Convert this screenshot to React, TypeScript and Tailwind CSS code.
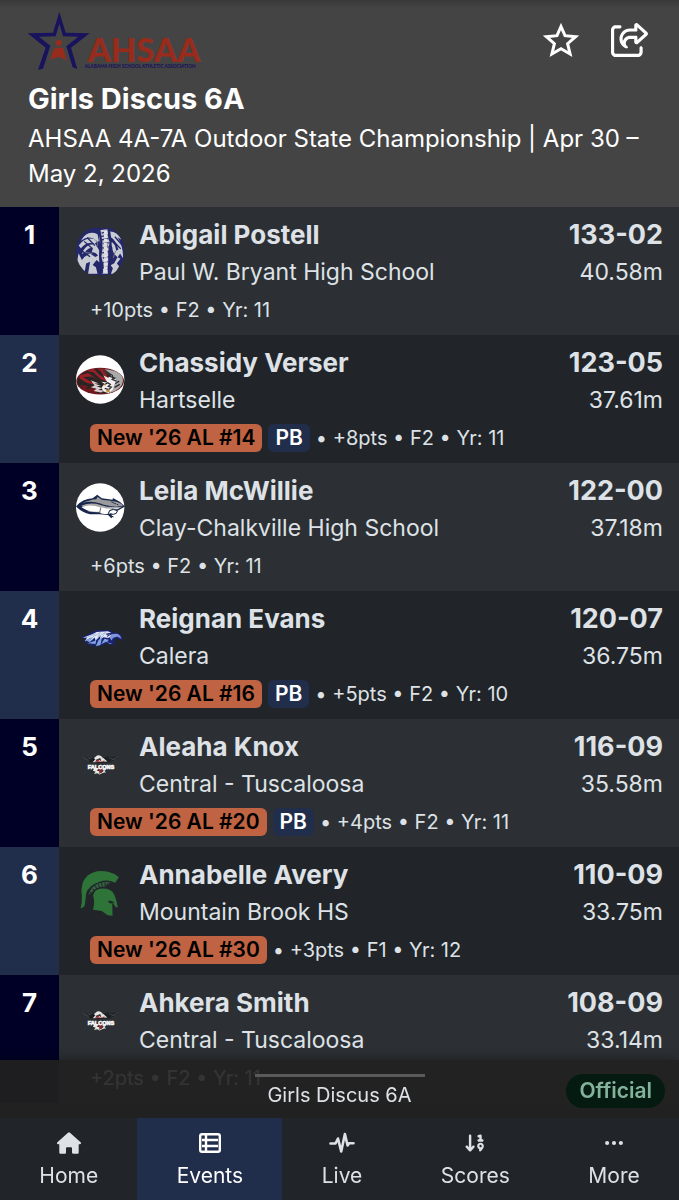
import React from 'react';
import { FaArrowDown19, FaRegShareFromSquare } from 'react-icons/fa6';
import { BsThreeDots } from 'react-icons/bs';

interface Result {
  name: string;
  school: string;
  mark: string;
  metric: string;
  badge?: string;
  pb?: boolean;
  details: string[];
  logo: React.FC;
}

const Elephant: React.FC = () => (
  <svg viewBox="0 0 150 150" className="size-full" aria-hidden="true">
    <clipPath id="elephant"><path d="M38 6Q75-2 112 6Q149 32 149 75Q149 118 112 144Q75 152 38 144Q0 118 0 75Q0 32 38 6Z" /></clipPath>
    <g clipPath="url(#elephant)">
      <path fill="#24276a" d="M0 0h150v150H0z" />
      <g fill="#c9cbd3">
        <path d="M70 10 96 7 99 37 107 50 100 71 103 95 95 125 98 143H80L85 118 77 90 82 63 72 43Z" />
        <path d="M66 22Q34 8 15 42Q38 25 59 38Q29 28 8 57L15 65Q35 41 60 53Q28 50 18 83L27 78Q38 60 52 65L48 77Q62 76 67 88L59 92 43 81Q27 88 18 101L8 80 3 108 26 140 31 112 43 106 37 143H66L61 123 51 116 63 101 72 109 71 71 58 50 70 43Z" />
        <path d="M101 14Q125 12 139 39L127 31Q145 58 144 96L135 81 124 98 117 111 106 117 113 126 107 143H119L132 120 125 112 136 97Q112 87 111 62L104 43Q121 50 123 73L130 69Q122 39 103 29Z" />
      </g>
      <g fill="none" stroke="#24276a" strokeWidth="4">
        <path d="M78 19 94 15M77 29 97 26M80 39 98 36M84 51 102 48M83 65 101 61M80 79 102 75M82 95 102 90M83 110 98 106M83 125 95 121" />
        <path d="M25 44 50 66M34 32 58 57M18 73 43 91M107 35 137 67M119 30 141 55" />
      </g>
      <path d="M71 8 78 48 74 88 79 142M101 12 106 46 102 80 102 142" fill="none" stroke="#24276a" strokeWidth="7" />
      <path d="M91 12v128" stroke="#e0e1e6" strokeWidth="11" strokeDasharray="10 2" />
      <path d="m59 39 8 9-3 12M103 43l-7 11 4 13M28 78l22 3M121 73l-7 22" stroke="#737a88" strokeWidth="3" fill="none" />
    </g>
  </svg>
);

const Tiger: React.FC = () => (
  <svg viewBox="0 0 150 150" className="size-full" aria-hidden="true">
    <circle cx="74" cy="75" r="74" fill="#fff" />
    <ellipse cx="74" cy="80" rx="73" ry="41" fill="#6f1a20" />
    <ellipse cx="74" cy="80" rx="69" ry="37" fill="#292525" />
    <path d="M87 44Q145 49 144 79Q141 106 104 116L97 98 119 91 113 62Z" fill="#aaa9aa" />
    <path d="M10 63 37 55 70 77 49 66 21 67 61 91 34 86 11 72ZM30 48 54 43 72 61 91 73 77 52 66 41 88 44 104 61 91 56 98 71 111 73 93 80 77 75 53 53Z" fill="#9e2027" />
    <path d="M12 91 38 96 28 105 52 101 75 111 55 118 28 110Z" fill="#75181c" />
    <path d="M84 63 98 70 109 61 112 76 123 71 119 84 132 84 117 91 113 106 99 117 83 111 78 100 87 88 77 82 96 84Z" fill="#f0eeee" />
    <path d="M45 77 70 87 56 87 76 94 63 96 80 102 68 107 86 109 77 115 54 110 63 103 45 99 57 93Z" fill="#d8cccc" />
    <path d="M83 47 96 53 90 55 107 61 102 65 119 71 111 75 124 80" fill="none" stroke="#393538" strokeWidth="4" />
    <path d="m87 91 10-6 8 5-6 6 9 2-8 8-12-4M120 88l12-8M118 99l16-9" fill="none" stroke="#28272b" strokeWidth="4" />
    <path d="m85 90 8-1-3 5ZM91 109l10-5 3 8-8 3Z" fill="#bd8b35" />
  </svg>
);

const Shark: React.FC = () => (
  <svg viewBox="0 0 150 150" className="size-full" aria-hidden="true">
    <circle cx="74" cy="75" r="74" fill="#fff" />
    <path d="M0 72Q20 48 51 47L65 36 79 47 112 51 113 46 120 50Q137 57 150 72L127 85 120 82 107 92 112 103 108 108 98 98 72 96 43 96Q15 88 0 72Z" fill="#17274b" />
    <path d="M18 62Q43 51 62 50L66 42 79 51 112 55Q136 59 145 69L123 73Q94 71 75 63Q45 53 18 62Z" fill="#9b9a9d" />
    <path d="M16 70Q44 57 75 67Q104 77 143 72L126 81 112 78 100 86 84 83 75 76 76 90 40 88Z" fill="#aaa7a7" />
    <path d="M17 74Q45 64 75 75L70 88Q40 90 17 74ZM78 74Q103 83 134 76L122 80 105 82 98 94Q82 96 74 92Z" fill="#fff" />
    <path d="m100 92 3-8 12-3 12 4-4 8-9 3-9-2 3 7 7 3" fill="#fff" stroke="#101e40" strokeWidth="3" />
    <path d="m108 57 8 4M117 63h5M125 66h4" stroke="#17274b" strokeWidth="3" />
  </svg>
);

const Eagle: React.FC = () => (
  <svg viewBox="0 -11 150 150" className="size-full" aria-hidden="true">
    <path d="M16 69 42 59 60 49 101 47 116 56Q137 55 141 67L142 80 133 76 125 72 117 78 119 90 109 93 93 87 78 95 67 92 60 102 57 93 38 97 45 89 27 90 36 82 19 80 32 76Z" fill="#1b2376" />
    <path d="m21 71 29-11 13-7 35-2 10 5-18 2 21 6-12 8-15-3-11 8 2-13-15 16-3-10-16 15 4-15-18 12 7-12Z" fill="#e4e9f5" />
    <path d="m29 78 24-10-12 17ZM36 88l22-8 5-9-3 19ZM61 97l7-18 12-12-5 26ZM77 91l10-17 13 3-5 8 16 4-7 1-12-7Z" fill="#80a2dc" />
    <path d="m33 70 26-12-7 10 23-14-8 14 24-14-11 15" fill="none" stroke="#acbddd" strokeWidth="3" />
    <path d="m108 60 13-1q13-1 18 15l-13-7-13 5-4 7-6-8Z" fill="#8197dc" />
    <path d="m93 61 9 2-7 4" fill="none" stroke="#18236d" strokeWidth="3" />
  </svg>
);

const Falcons: React.FC = () => (
  <svg viewBox="0 -3 150 150" className="size-full" aria-hidden="true">
    <path d="m10 48 18 4 14 6 15-6 10 8 7-12 11 8 11-6 10 4 26-7-13 7 10 2-22 4 10 3-21 7H49l-13-6 4-3-14-3 5-3-16-4Z" fill="#1c1f22" />
    <path d="m16 50 19 9 13-4M99 55l16 3 14-9M24 55l17 10M108 62l13-6" stroke="#484b4e" strokeWidth="2" fill="none" />
    <path d="M60 51q10-9 21 2l2 7-11-4-12 5-5-6ZM59 60l-8 8 45-2-11-9-7 9-8-6-6 6Z" fill="#e8e6e2" />
    <path d="m75 60 9-5 4 6-10 4ZM56 85l12 2-4 7 8 2-1 8 14-9-5-6 12-5v6l-5 5 5 4-11 2-8 5-8-4-10 2 5-7-8-3Z" fill="#e8e6e2" />
    <path d="m68 60 7 8 12-6v5H57ZM68 84h12l-2 18-6-4Z" fill="#99292b" />
    <text x="36" y="88" fontFamily="Liberation Sans" fontWeight="900" fontSize="17" fill="#f2f2f2" stroke="#f2f2f2" strokeWidth="2">FALCONS</text>
  </svg>
);

const Spartan: React.FC = () => (
  <svg viewBox="0 0 150 150" className="size-full" fill="#2e7338" aria-hidden="true">
    <path d="M14 126Q19 110 18 90Q12 48 35 27Q59 7 95 14Q115 18 131 31L120 48Q96 37 73 45Q39 55 31 81Q29 101 27 117Q23 127 14 126Z" />
    <path d="m38 86 10-22 18-13 24-6 15 2-15 14Q62 59 47 79Z" fill="#356444" />
    <path d="M51 66 59 77M59 58 66 70M68 51 73 66M78 48 81 62M89 46v15M99 47l-8 14M43 76l9 10" stroke="#202529" strokeWidth="3" />
    <path d="M52 131Q59 103 52 87Q57 65 81 66Q109 66 117 84L123 101 128 123 122 123 114 112 111 111 112 149 97 148 79 135Z" />
    <path d="m96 104 10-1 12 6-8 3-10-2 1-4Z" fill="#202529" />
  </svg>
);

const results: Result[] = [
  { name: 'Abigail Postell', school: 'Paul W. Bryant High School', mark: '133-02', metric: '40.58m', details: ['+10pts', 'F2', 'Yr: 11'], logo: Elephant },
  { name: 'Chassidy Verser', school: 'Hartselle', mark: '123-05', metric: '37.61m', badge: "New '26 AL #14", pb: true, details: ['+8pts', 'F2', 'Yr: 11'], logo: Tiger },
  { name: 'Leila McWillie', school: 'Clay-Chalkville High School', mark: '122-00', metric: '37.18m', details: ['+6pts', 'F2', 'Yr: 11'], logo: Shark },
  { name: 'Reignan Evans', school: 'Calera', mark: '120-07', metric: '36.75m', badge: "New '26 AL #16", pb: true, details: ['+5pts', 'F2', 'Yr: 10'], logo: Eagle },
  { name: 'Aleaha Knox', school: 'Central - Tuscaloosa', mark: '116-09', metric: '35.58m', badge: "New '26 AL #20", pb: true, details: ['+4pts', 'F2', 'Yr: 11'], logo: Falcons },
  { name: 'Annabelle Avery', school: 'Mountain Brook HS', mark: '110-09', metric: '33.75m', badge: "New '26 AL #30", details: ['+3pts', 'F1', 'Yr: 12'], logo: Spartan },
  { name: 'Ahkera Smith', school: 'Central - Tuscaloosa', mark: '108-09', metric: '33.14m', details: ['+2pts', 'F2', 'Yr: 11'], logo: Falcons },
];

const AssociationLogo = () => (
  <svg viewBox="83 34 525 177" className="h-[59px] w-[175px] overflow-visible" role="img" aria-label="AHSAA">
    <path d="M113 210 136 144 82 101 158 99 177 36 196 99 268 101 212 144 231 208 217 203 198 140 234 111 188 110 177 72 166 110 116 111 150 138 128 207Z" fill="#18135c" />
    <circle cx="175" cy="129" r="9" fill="#982c1c" />
    <path d="M164 144h24l5 15 5 24-13-8-10-4-13 5-12 5 6-22Z" fill="#982c1c" />
    <text x="262" y="186" fontFamily="Lato" fontWeight="900" fontSize="99" fill="#982c1c">AHSAA</text>
    <text x="253" y="204" fontFamily="Lato" fontWeight="900" fontSize="14" fill="#18135c">ALABAMA HIGH SCHOOL ATHLETIC ASSOCIATION</text>
  </svg>
);

const HomeIcon = () => (
  <svg viewBox="0 0 24 22" className="h-[22px] w-6" fill="currentColor" aria-hidden="true">
    <path d="M11 .7a1.6 1.6 0 0 1 2 0l10.6 9.6c.8.8.4 2-.7 2H21.7v8.2c0 .8-.6 1.3-1.3 1.3h-4.2c-.7 0-1.2-.5-1.2-1.2v-4c0-.8-.5-1.3-1.2-1.3h-3.6c-.7 0-1.2.5-1.2 1.2v4c0 .8-.5 1.3-1.2 1.3H3.6c-.7 0-1.3-.5-1.3-1.3v-8.2H1.1c-1.1 0-1.5-1.2-.7-2Z" />
  </svg>
);

const EventsIcon = () => (
  <svg viewBox="0 0 22 20" className="h-5 w-[22px]" fill="none" stroke="currentColor" strokeWidth="2.4" aria-hidden="true">
    <rect x="1.2" y="1.2" width="19.6" height="17.6" rx="1.8" />
    <path d="M3 7h16M3 13h16M7 2v16" />
  </svg>
);

const LiveIcon = () => (
  <svg viewBox="0 0 26 22" className="h-[22px] w-[26px]" fill="none" stroke="currentColor" strokeWidth="2.6" strokeLinecap="round" strokeLinejoin="round" aria-hidden="true">
    <path d="M1.5 11.5h5l2.5-5 3.2 13 3.7-17.5 2.7 11.5 1.4-2.2h4.5" />
  </svg>
);

const tabs = [
  { label: 'Home', icon: <HomeIcon /> },
  { label: 'Events', icon: <EventsIcon />, active: true },
  { label: 'Live', icon: <LiveIcon /> },
  { label: 'Scores', icon: <FaArrowDown19 className="size-[22px]" /> },
  { label: 'More', icon: <BsThreeDots className="size-[22px]" /> },
];

const ResultRow = ({ result, place }: { result: Result; place: number }) => {
  const Logo = result.logo;
  return (
    <li className="group flex min-h-32 odd:bg-[#2c3034] even:bg-[#212529]">
      <div className="w-[59px] shrink-0 pt-2.5 text-center text-[26px] leading-9 font-bold text-white group-odd:bg-[#000026] group-even:bg-[#202d4b]">
        {place}
      </div>
      <div className="min-w-0 flex-1 pt-2.5 pr-4">
        <div className="flex pl-[17px]">
          <div className="mt-2.5 mr-3.5 size-[49px] shrink-0">
            <Logo />
          </div>
          <div className="min-w-0 flex-1">
            <h2 className="truncate text-[26px] leading-9 font-bold">{result.name}</h2>
            <p className="truncate text-[23px] leading-[38px]">{result.school}</p>
          </div>
          <div className="text-right">
            <p className="text-[27px] leading-9 font-bold">{result.mark}</p>
            <p className="text-[23px] leading-[38px]">{result.metric}</p>
          </div>
        </div>
        <div className="mt-[5px] flex h-7 items-center gap-1.5 pl-[31px] text-xl leading-7">
          {result.badge && <span className="rounded-md bg-[#bf6342] px-[7px] text-[21px] font-semibold text-black">{result.badge}</span>}
          {result.pb && <span className="rounded-md bg-[#202d4b] px-[7px] text-[21px] font-semibold text-white">PB</span>}
          <span className="whitespace-pre">{result.badge ? '• ' : ''}{result.details.join(' • ')}</span>
        </div>
      </div>
    </li>
  );
};

export default function App() {
  return (
    <div className="min-h-screen bg-[#212529] font-['Inter',sans-serif] text-[#dee2e6]">
      <header className="bg-[#444] bg-linear-to-b from-[#383838] to-[#444] to-[8px] px-7 pt-[11px] pb-4 text-white">
        <div className="flex items-start justify-between">
          <AssociationLogo />
          <div className="flex items-center gap-8 pt-2.5 pr-0.5">
            <button type="button" aria-label="Favorite">
              <svg viewBox="0 0 36 36" className="size-9" fill="none" stroke="currentColor" strokeWidth="3" aria-hidden="true">
                <path d="m18 4.5 4 9.2 10.6 1-8 7 2.5 10.3L18 26.8 8.9 32l2.5-10.3-8-7 10.6-1Z" />
              </svg>
            </button>
            <button type="button" aria-label="Share">
              <FaRegShareFromSquare className="size-[38px]" />
            </button>
          </div>
        </div>
        <h1 className="mt-[11px] text-[29px] leading-9 font-bold">Girls Discus 6A</h1>
        <p className="mt-1 text-2xl leading-[35px]">AHSAA 4A-7A Outdoor State Championship | Apr 30 – May 2, 2026</p>
      </header>

      <main>
        <ol>
          {results.map((result, index) => (
            <ResultRow key={result.name} result={result} place={index + 1} />
          ))}
        </ol>
      </main>

      <footer className="fixed inset-x-0 bottom-0">
        <div className="grid h-[58px] grid-cols-[1fr_auto_1fr] bg-[#212121]/90 shadow-[0_-2px_10px_rgba(0,0,0,0.3)]">
          <div className="col-start-2 flex flex-col items-center pt-3.5">
            <div className="h-[3px] w-[170px] bg-[#5a5a5a]" />
            <p className="mt-1 text-xl leading-7">Girls Discus 6A</p>
          </div>
          <span className="mt-3.5 mr-3.5 h-[34px] justify-self-end rounded-full bg-[#051b11] px-[13px] text-[21px] leading-[34px] font-semibold text-[#83b39b]">Official</span>
        </div>
        <nav className="flex h-[82px] bg-[#212529]">
          {tabs.map((tab) => (
            <a
              key={tab.label}
              href={`#${tab.label.toLowerCase()}`}
              aria-current={tab.active ? 'page' : undefined}
              className={`flex flex-auto flex-col items-center pt-3 text-[21px] leading-8 ${tab.active ? 'bg-[#202d4b] text-white' : ''}`}
            >
              <span className="flex h-[26px] items-center">{tab.icon}</span>
              <span className="mt-1">{tab.label}</span>
            </a>
          ))}
        </nav>
      </footer>
    </div>
  );
}
